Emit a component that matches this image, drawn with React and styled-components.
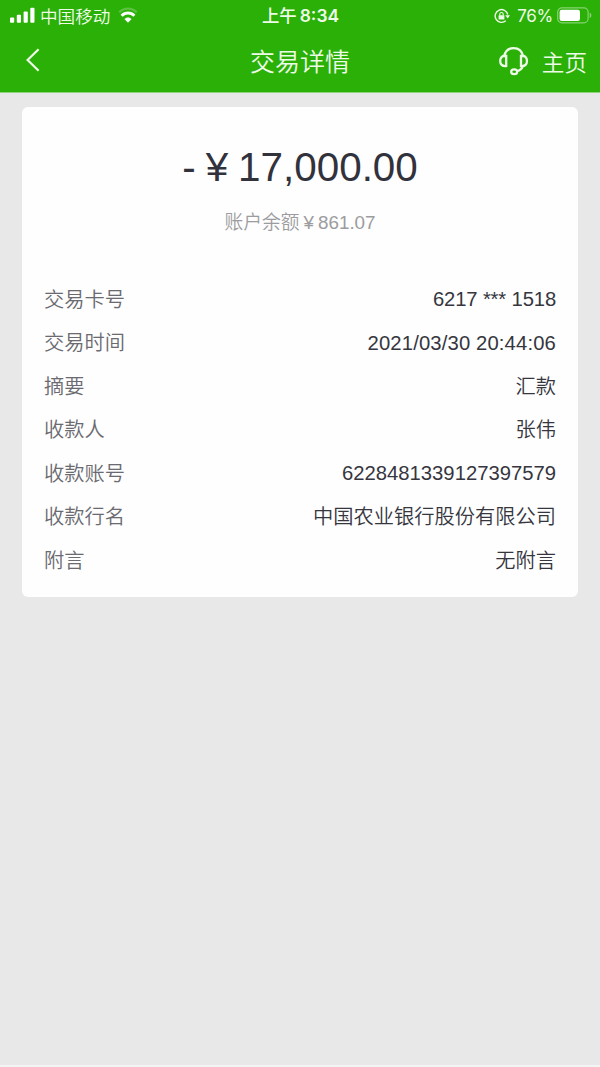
import React from "react";
import styled, { createGlobalStyle } from "styled-components";

const GlobalStyle = createGlobalStyle`
  * {
    box-sizing: border-box;
  }
  body {
    margin: 0;
    background-color: #e8e8e8;
    font-family: "Liberation Sans", "Noto Sans CJK SC", sans-serif;
  }
`;
const Screen = styled.div`
  display: flex;
  flex-direction: column;
  height: 1067px;
  background-color: #e8e8e8;
  border-bottom: 2px solid #f4f4f4;
`;
const Top = styled.header`
  height: 93px;
  color: #effbe9;
  background-color: #2ab007;
  border-bottom: 1px solid #8fd47c;
`;
const StatusBar = styled.div`
  display: grid;
  grid-template-columns: 1fr auto 1fr;
  align-items: center;
  height: 31px;
  padding: 0 8px 0 10px;
  font-family: Inter, "Noto Sans CJK SC", sans-serif;
  font-size: 17.6px;
  line-height: 31px;
`;
const StatusSide = styled.div`
  display: flex;
  align-items: center;
  justify-content: ${props => (props.$end ? "flex-end" : "flex-start")};

  svg {
    margin-bottom: ${props => (props.$end ? "1px" : "3px")};
  }
`;
const Carrier = styled.span`
  margin: 0 8px 0 5px;
  font-weight: 350;
`;
const Clock = styled.div`
  display: flex;
  gap: 3px;
  height: 31px;
  padding-right: 1px;
  font-size: 17.4px;
  font-weight: 500;
  line-height: 30px;
`;
const Digits = styled.span`
  font-weight: 600;
`;
const Percent = styled.span`
  margin: 0 4px 0 7px;
  padding-top: 1px;
  font-size: 17px;
  letter-spacing: -0.3px;
`;
const NavBar = styled.div`
  display: grid;
  grid-template-columns: 1fr auto 1fr;
  align-items: center;
  height: 61px;
  padding: 0 13px 0 25px;
`;
const Back = styled.a`
  height: 28px;
`;
const Title = styled.h1`
  margin: 1px 12px 0 0;
  font-size: 25px;
  font-weight: 350;
  line-height: 61px;
`;
const NavRight = styled.div`
  display: flex;
  align-items: center;
  justify-content: flex-end;
  gap: 12px;
  padding-bottom: 2px;
  font-size: 22.6px;
  font-weight: 350;
`;
const Card = styled.main`
  height: 490px;
  margin: 14px 22px 0;
  padding: 35px 22px 0;
  border-radius: 6px;
  background-color: #fefefe;
`;
const Amount = styled.div`
  display: flex;
  justify-content: center;
  height: 50px;
  font-size: 40.4px;
  line-height: 50px;
  color: #32323d;
`;
const Yen = styled.span`
  margin: ${props => props.$space};
`;
const Balance = styled.div`
  display: flex;
  justify-content: center;
  height: 30px;
  margin-top: 16px;
  font-size: 18.8px;
  font-weight: 350;
  line-height: 30px;
  color: #9c9c9e;
`;
const List = styled.dl`
  margin: 40px 0 0;
`;
const Row = styled.div`
  display: flex;
  justify-content: space-between;
  height: 43.5px;
  font-size: 20.25px;
  font-weight: 350;
  line-height: 43.5px;
`;
const Label = styled.dt`
  padding-top: 0.5px;
  color: #6a6a70;
`;
const Value = styled.dd`
  margin: 0;
  padding-top: ${props => (props.$numeric ? "0" : "0.5px")};
  color: #36363e;
  letter-spacing: ${props => props.$spacing || "normal"};
`;

const details = [
  {
    label: "交易卡号",
    value: "6217 *** 1518",
    numeric: true,
    spacing: "-0.15px"
  },
  {
    label: "交易时间",
    value: "2021/03/30 20:44:06",
    numeric: true,
    spacing: "0.14px"
  },
  { label: "摘要", value: "汇款" },
  { label: "收款人", value: "张伟" },
  { label: "收款账号", value: "6228481339127397579", numeric: true },
  { label: "收款行名", value: "中国农业银行股份有限公司" },
  { label: "附言", value: "无附言" }
];

function SignalIcon() {
  return (
    <svg width="25" height="16" viewBox="0 0 25 16" fill="#fff">
      <rect x="0" y="10.5" width="4.2" height="5.2" rx="1" />
      <rect x="6.8" y="7.8" width="4.2" height="7.9" rx="1" />
      <rect x="13.6" y="4.4" width="4.2" height="11.3" rx="1" />
      <rect x="20.3" y="0.8" width="4.2" height="14.9" rx="1" />
    </svg>
  );
}

function WifiIcon() {
  return (
    <svg width="20" height="16" viewBox="0 0 20 16" fill="none">
      <path
        d="M1.2 5.2C6.2 0.3 13.8 0.3 18.8 5.2"
        stroke="#5cc040"
        strokeWidth="2.2"
      />
      <path
        d="M3.6 8.8C7.3 5 12.7 5 16.4 8.8"
        stroke="#fff"
        strokeWidth="3"
      />
      <path d="M6.4 12C8.6 9.9 11.4 9.9 13.6 12L10 15.7Z" fill="#fff" />
    </svg>
  );
}

function RotationLockIcon() {
  return (
    <svg width="16" height="16" viewBox="0 0 16 16" fill="none">
      <path
        d="M13.8 6.5A6.4 6.4 0 1 0 11.8 12.8"
        stroke="#effbe9"
        strokeWidth="1.4"
      />
      <path d="M11.2 7.2H16L13.7 10.4Z" fill="#effbe9" />
      <rect x="4.6" y="7.2" width="5.8" height="4.4" rx="0.6" fill="#effbe9" />
      <path
        d="M5.8 7.4V6.2a1.7 1.7 0 0 1 3.4 0v1.2"
        stroke="#effbe9"
        strokeWidth="1.1"
      />
    </svg>
  );
}

function BatteryIcon() {
  return (
    <svg width="35" height="17" viewBox="0 0 35 17" fill="none">
      <rect
        x="0.7"
        y="0.9"
        width="30.4"
        height="15"
        rx="4.2"
        stroke="#86d271"
        strokeWidth="1.2"
      />
      <rect x="2.6" y="2.8" width="20.4" height="11.2" rx="2.2" fill="#fff" />
      <path d="M32.7 5.6C34.9 6.6 34.9 10.2 32.7 11.2Z" fill="#86d271" />
    </svg>
  );
}

function BackIcon() {
  return (
    <svg width="16" height="24" viewBox="0 0 16 24" fill="none">
      <path d="M13.6 1.2L2.6 12L13.6 22.8" stroke="#effbe9" strokeWidth="2.2" />
    </svg>
  );
}

function HeadsetIcon() {
  return (
    <svg
      width="32"
      height="30"
      viewBox="0 0 32 30"
      fill="none"
      stroke="#effbe9"
      strokeWidth="2.3"
    >
      <path d="M6.2 10.2C7.2 5 11 2.2 15.6 2.2S24 5 25 10.2" />
      <path d="M8.2 9.8C4.4 9.4 2.2 11.4 2.2 15S4.4 20.4 8.2 20Z" />
      <path d="M23 9.8C26.8 9.4 29 11.4 29 15S26.8 20.4 23 20Z" />
      <path d="M24.9 20.2C23.9 22.8 22 24.6 19 25.2" />
      <ellipse cx="16.2" cy="25.8" rx="3" ry="2.4" />
    </svg>
  );
}

class App extends React.Component {
  render() {
    return (
      <Screen>
        <GlobalStyle />
        <Top>
          <StatusBar>
            <StatusSide>
              <SignalIcon />
              <Carrier>中国移动</Carrier>
              <WifiIcon />
            </StatusSide>
            <Clock>
              上午<Digits>8:34</Digits>
            </Clock>
            <StatusSide $end>
              <RotationLockIcon />
              <Percent>76%</Percent>
              <BatteryIcon />
            </StatusSide>
          </StatusBar>
          <NavBar>
            <Back>
              <BackIcon />
            </Back>
            <Title>交易详情</Title>
            <NavRight>
              <HeadsetIcon />
              主页
            </NavRight>
          </NavBar>
        </Top>
        <Card>
          <Amount>
            -<Yen $space="0 10px">¥</Yen>17,000.00
          </Amount>
          <Balance>
            账户余额<Yen $space="0 4px">¥</Yen>861.07
          </Balance>
          <List>
            {details.map(item => (
              <Row key={item.label}>
                <Label>{item.label}</Label>
                <Value $numeric={item.numeric} $spacing={item.spacing}>
                  {item.value}
                </Value>
              </Row>
            ))}
          </List>
        </Card>
      </Screen>
    );
  }
}

export default App;
